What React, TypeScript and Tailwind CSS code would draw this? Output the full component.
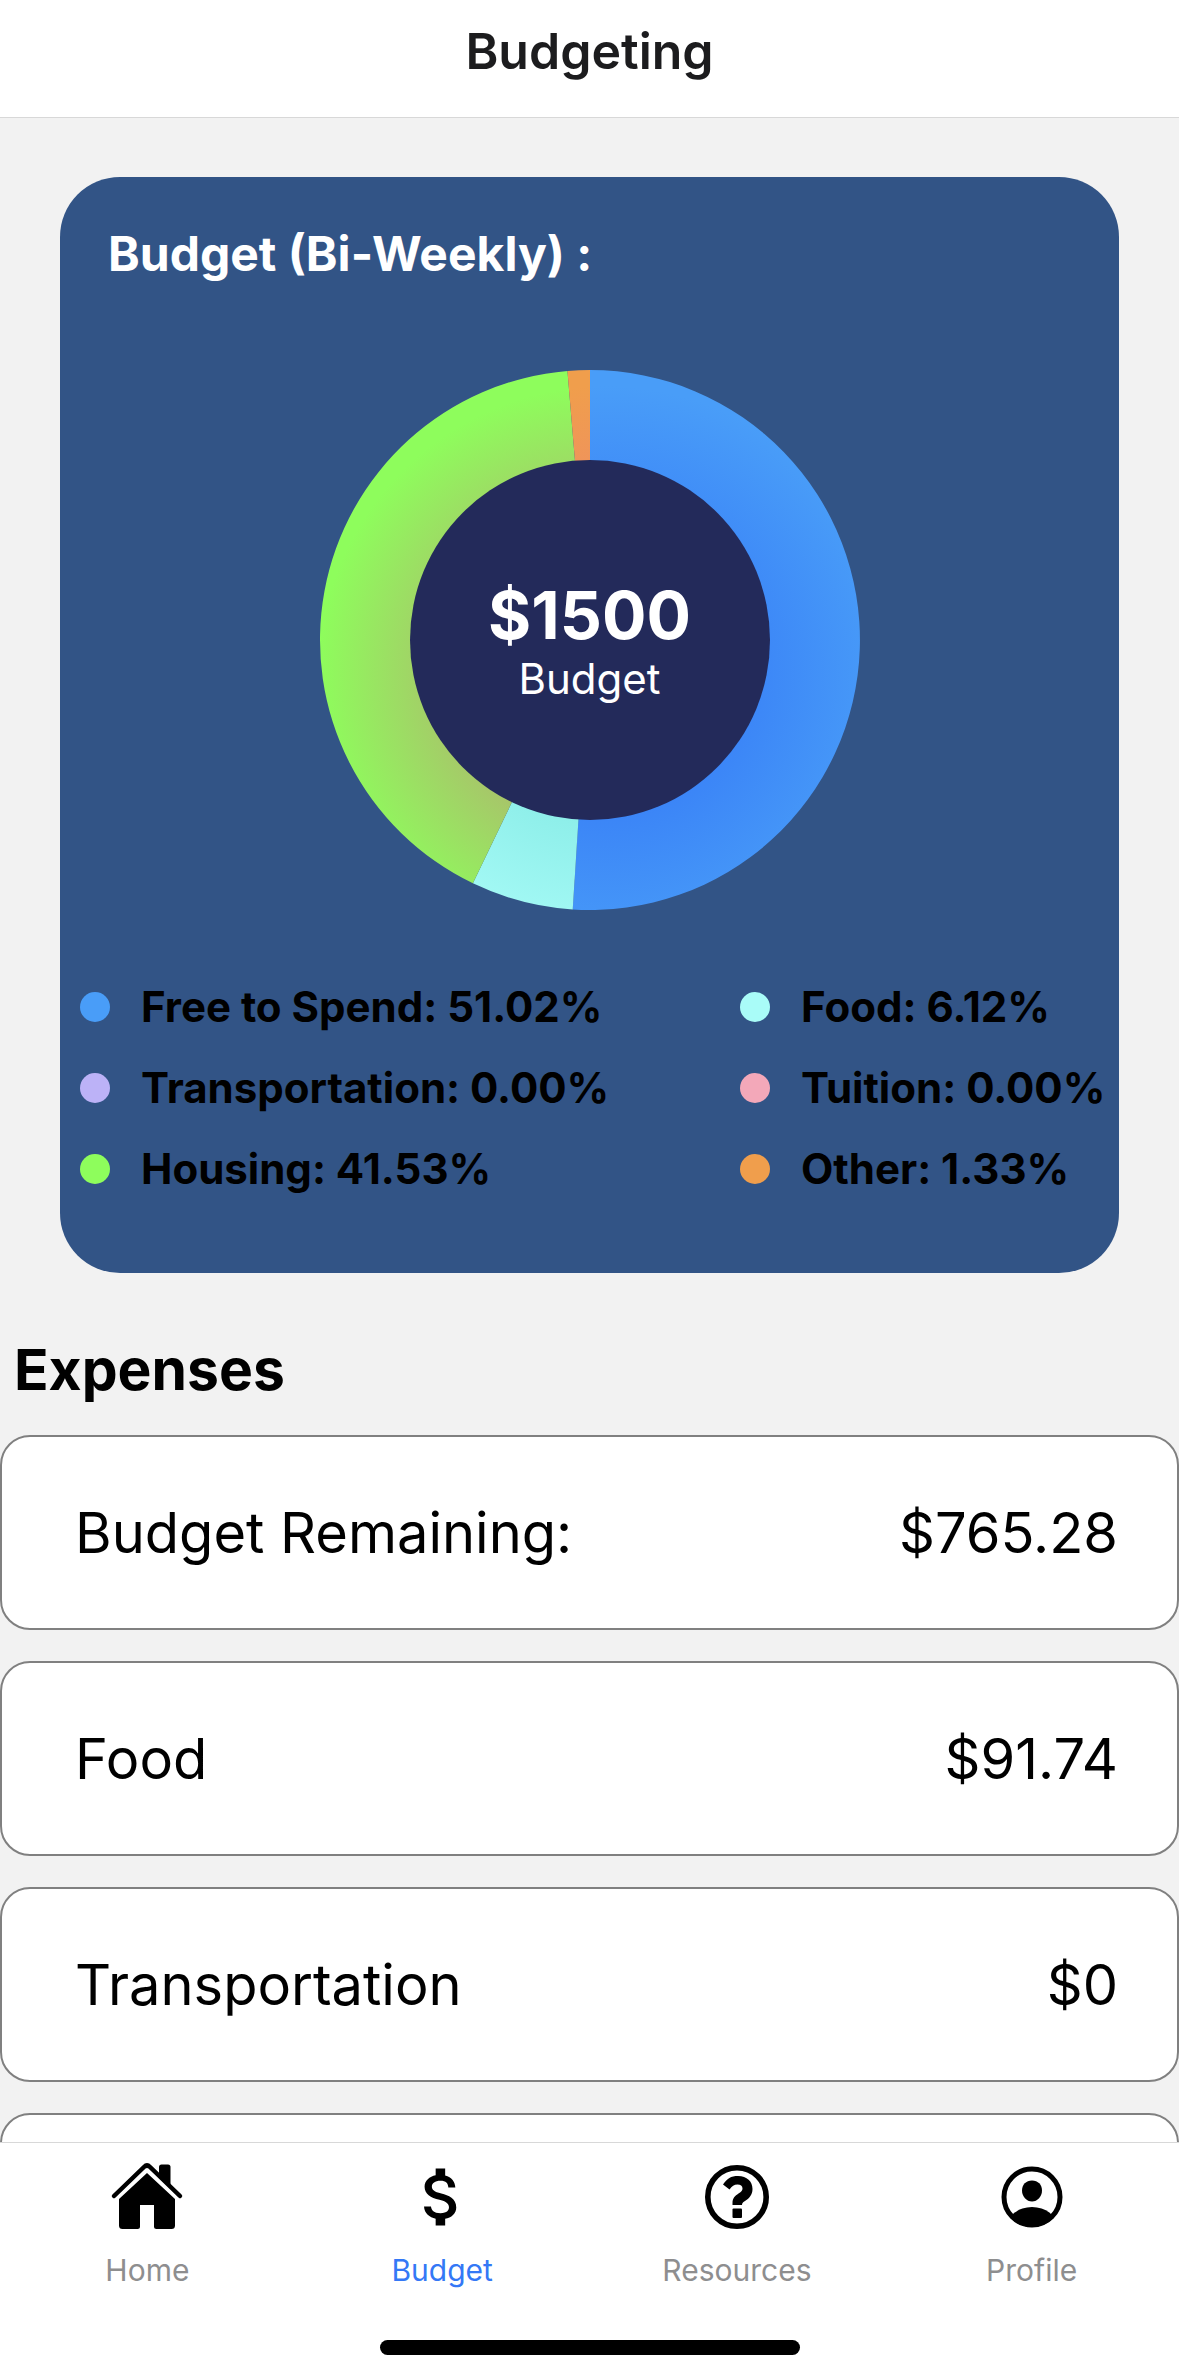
import React from "react";

type Slice = { id: string; label: string; value: number; color: string; center: string };

const slices: Slice[] = [
  { id: "free", label: "Free to Spend", value: 51.02, color: "#499df8", center: "#2e6ef6" },
  { id: "food", label: "Food", value: 6.12, color: "#a9fcf8", center: "#71e0da" },
  { id: "transportation", label: "Transportation", value: 0, color: "#bcb2f7", center: "#8f80f3" },
  { id: "tuition", label: "Tuition", value: 0, color: "#f3a8b9", center: "#ff7f97" },
  { id: "housing", label: "Housing", value: 41.53, color: "#8efd5c", center: "#c6827a" },
  { id: "other", label: "Other", value: 1.33, color: "#f09e4c", center: "#ee7a80" },
];

const expenses = [
  { name: "Budget Remaining:", amount: "$765.28" },
  { name: "Food", amount: "$91.74" },
  { name: "Transportation", amount: "$0" },
  { name: "", amount: "" },
];

const R = 270;

function point(percent: number) {
  const a = (percent / 100) * 2 * Math.PI;
  return `${(R + R * Math.sin(a)).toFixed(2)} ${(R - R * Math.cos(a)).toFixed(2)}`;
}

function Donut() {
  let start = 0;
  const arcs = slices.map((s) => {
    const from = start;
    start += s.value;
    return { ...s, from, to: start };
  });
  return (
    <svg viewBox="0 0 540 540" className="col-start-1 row-start-1 size-[540px]" aria-hidden="true">
      <defs>
        {slices.map((s) => (
          <radialGradient key={s.id} id={s.id} gradientUnits="userSpaceOnUse" cx="286" cy="304" r="288">
            <stop offset="0" stopColor={s.center} />
            <stop offset="1" stopColor={s.color} />
          </radialGradient>
        ))}
      </defs>
      {arcs
        .filter((s) => s.value > 0)
        .map((s) => (
          <path
            key={s.id}
            fill={`url(#${s.id})`}
            d={`M${R} ${R}L${point(s.from)}A${R} ${R} 0 ${s.value > 50 ? 1 : 0} 1 ${point(s.to)}Z`}
          />
        ))}
      <circle cx="270" cy="270" r="180" fill="#232a5a" />
    </svg>
  );
}

function HomeIcon() {
  return (
    <svg viewBox="0 0 76 76" className="size-[76px]" aria-hidden="true">
      <path
        d="M5 37 35 8Q38 5 41 8L71 37"
        fill="none"
        stroke="#000"
        strokeWidth="4.5"
        strokeLinecap="round"
        strokeLinejoin="round"
      />
      <path d="M50 8q0-2.500 2.500-2.500h6.500q2.500 0 2.500 2.500v20L50 16Z" />
      <path d="M38 14 66 40v26.500q0 3.500-3.500 3.500H47.500q-2.500 0-2.500-2.500V46H31v21.500q0 2.500-2.500 2.500H13.500q-3.500 0-3.500-3.500V40Z" />
    </svg>
  );
}

function DollarIcon() {
  return (
    <svg viewBox="0 0 24 24" className="size-[76px]" aria-hidden="true">
      <path d="M11.800 10.900c-2.270-.590-3-1.200-3-2.150 0-1.090 1.010-1.850 2.700-1.850 1.780 0 2.440.850 2.500 2.100h2.210c-.070-1.720-1.120-3.300-3.210-3.810V3h-3v2.160c-1.940.420-3.500 1.680-3.500 3.610 0 2.310 1.910 3.460 4.700 4.130 2.500.600 3 1.480 3 2.410 0 .690-.490 1.790-2.700 1.790-2.060 0-2.870-.920-2.980-2.100h-2.200c.120 2.190 1.760 3.420 3.680 3.830V21h3v-2.150c1.950-.370 3.500-1.500 3.500-3.550 0-2.840-2.430-3.810-4.700-4.400z" />
    </svg>
  );
}

function HelpIcon() {
  return (
    <svg viewBox="0 0 76 76" className="size-[76px]" aria-hidden="true">
      <circle cx="38" cy="38" r="29.200" fill="none" stroke="#000" strokeWidth="5.600" />
      <path d="M24 25.500C28 19.500 32 17 39 17C48 17 53.500 22.500 53.500 30C53.500 36 50 39.500 46 42C43.500 43.500 43 44.500 43 46H33.500V44C33.500 39 36 37 39.500 34.500C42.500 32.500 43.500 31.500 43.500 29.500C43.500 27 41.500 25.500 38.500 25.500C35 25.500 33 27 30.500 30.500Z" />
      <rect x="33.500" y="49.500" width="9.500" height="9.500" rx="1" />
    </svg>
  );
}

function ProfileIcon() {
  return (
    <svg viewBox="0 0 76 76" className="size-[76px]" aria-hidden="true">
      <clipPath id="profile-ring">
        <circle cx="38" cy="38" r="30" />
      </clipPath>
      <circle cx="38" cy="38" r="28" fill="none" stroke="#000" strokeWidth="5" />
      <path d="M38 21.500c6 0 10 4.200 10 10 0 6-4.500 11-10 11s-10-5-10-11c0-5.800 4-10 10-10Z" />
      <ellipse cx="38" cy="68" rx="25" ry="20" clipPath="url(#profile-ring)" />
    </svg>
  );
}

const tabs = [
  { label: "Home", icon: <HomeIcon />, active: false },
  { label: "Budget", icon: <DollarIcon />, active: true },
  { label: "Resources", icon: <HelpIcon />, active: false },
  { label: "Profile", icon: <ProfileIcon />, active: false },
];

export default function App() {
  return (
    <div className="flex h-screen flex-col bg-[#f2f2f2] font-['Inter',sans-serif] text-black">
      <header className="flex shrink-0 justify-center border-b border-[#d8d8d8] bg-white pt-[19px] pb-[34px]">
        <h1 className="text-[50px] leading-[64px] font-semibold text-[#1c1c1e]">Budgeting</h1>
      </header>

      <main className="min-h-0 flex-1 overflow-y-auto [scrollbar-width:none]">
        <section className="mx-[60px] mt-[59px] rounded-[60px] bg-[#325486] pt-[47px] pb-16">
          <h2 className="px-12 text-[48px] leading-[60px] font-bold text-white">Budget (Bi-Weekly) :</h2>
          <div className="mt-[86px] grid place-items-center">
            <Donut />
            <div className="z-10 col-start-1 row-start-1 pt-1.5 text-center text-white">
              <p className="text-[66px] leading-[72px] font-bold">$1500</p>
              <p className="text-[42px] leading-[56px]">Budget</p>
            </div>
          </div>
          <ul className="mt-14 grid grid-cols-[660fr_379fr] pl-5">
            {slices.map((s) => (
              <li key={s.id} className="flex h-[81px] items-center gap-[31px] whitespace-nowrap">
                <span className="size-[30px] shrink-0 rounded-full" style={{ backgroundColor: s.color }} />
                <span className="text-[42px] leading-[54px] font-bold">
                  {s.label}: {s.value.toFixed(2)}%
                </span>
              </li>
            ))}
          </ul>
        </section>

        <h2 className="mt-[61px] px-[14px] text-[57px] leading-[72px] font-bold">Expenses</h2>
        <ul className="mt-[29px] flex flex-col gap-[31px]">
          {expenses.map((e, i) => (
            <li
              key={i}
              className="flex h-[195px] items-center justify-between rounded-[30px] border-2 border-[#808080] bg-white pr-[59px] pl-[73px] text-[56px] leading-[72px]"
            >
              <span>{e.name}</span>
              <span>{e.amount}</span>
            </li>
          ))}
        </ul>
      </main>

      <nav className="shrink-0 border-t border-[#d8d8d8] bg-white pt-4 pb-6">
        <div className="grid grid-cols-4">
          {tabs.map((t) => (
            <a
              key={t.label}
              href="#"
              aria-current={t.active ? "page" : undefined}
              className={
                t.active
                  ? "flex flex-col items-center gap-[17px] text-[30px] leading-9 text-[#3478f6]"
                  : "flex flex-col items-center gap-[17px] text-[30px] leading-9 text-[#8e8e8f]"
              }
            >
              <span className="text-black">{t.icon}</span>
              {t.label}
            </a>
          ))}
        </div>
        <div className="mx-auto mt-[52px] h-[15px] w-[420px] rounded-full bg-black" />
      </nav>
    </div>
  );
}
